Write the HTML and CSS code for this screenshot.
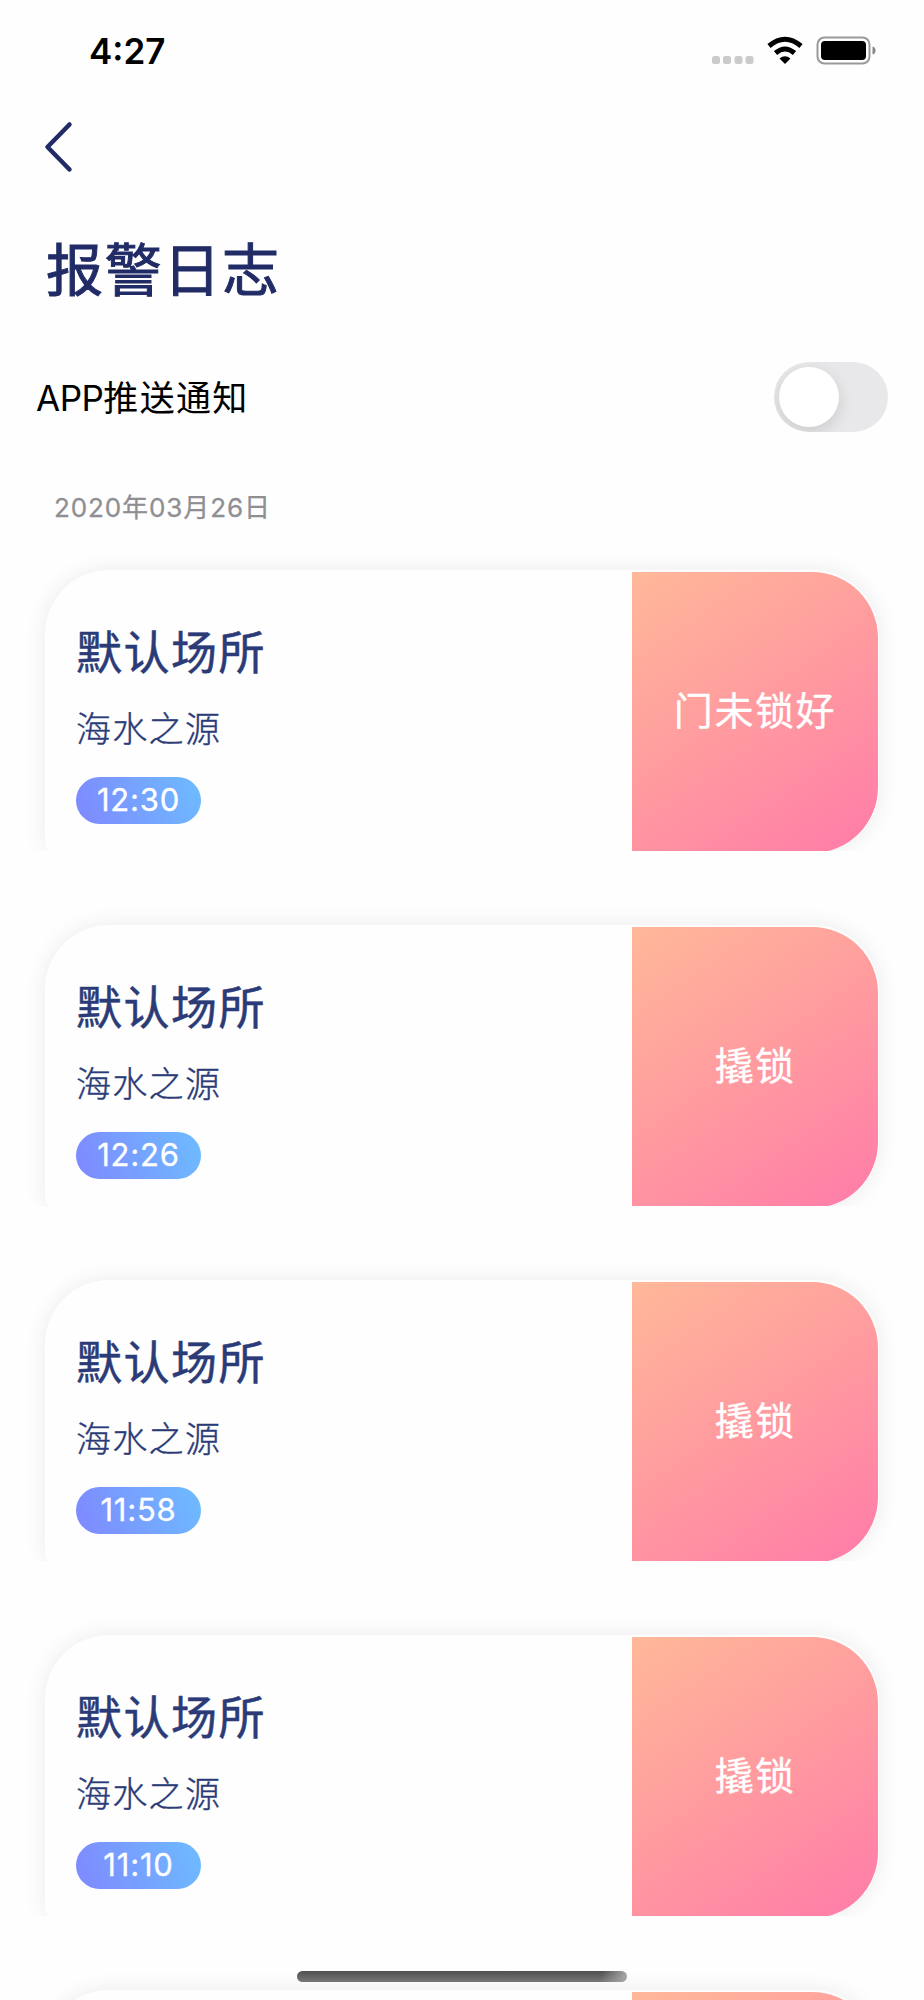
FILE: index.html
```
<!DOCTYPE html>
<html lang="zh-CN">
<head>
    <meta charset="UTF-8">
    <meta name="viewport" content="width=device-width, initial-scale=1.0">
    <title>报警日志</title>
    <link rel="stylesheet" href="styles.css">
</head>
<body>
    <div class="status-bar">
        <span class="time">4:27</span>
        <svg class="status-icons" width="168" height="30" viewBox="0 0 168 30">
            <g fill="#cbcbcb">
                <rect x="0" y="20" width="8" height="8" rx="2.5"/>
                <rect x="11" y="20" width="8" height="8" rx="2.5"/>
                <rect x="22.500" y="20" width="8" height="8" rx="2.5"/>
                <rect x="33.5" y="20" width="8" height="8" rx="2.5"/>
            </g>
            <g fill="none" stroke="#000" stroke-width="5">
                <path d="M57 10Q73 -3.500 89 10"/>
                <path d="M63.500 17Q73 9 82.500 17"/>
            </g>
            <path d="M67.500 22.500Q73 18 78.500 22.500L73 28Z"/>
            <rect x="105.500" y="1.500" width="52" height="26" rx="7" fill="none" stroke="#999" stroke-width="2"/>
            <rect x="109" y="5" width="45" height="19" rx="4"/>
            <path d="M160.500 10.500Q163.500 11 163.500 14.500T160.500 18.500Z" fill="#888"/>
        </svg>
    </div>

    <a class="back" href="#">
        <svg width="30" height="52" viewBox="0 0 30 52"><path d="M25.500 3.500L3.500 26L25.500 48.500" fill="none" stroke="#212c66" stroke-width="4.500" stroke-linecap="round" stroke-linejoin="round"/></svg>
    </a>

    <h1>报警日志</h1>

    <div class="push-row">
        <div class="push-label"><span class="en">APP</span>推送通知</div>
        <div class="switch"><div class="knob"></div></div>
    </div>

    <div class="date">2020年03月26日</div>

    <div class="list">
        <div class="item">
            <div class="card">
                <div class="info">
                    <div class="place">默认场所</div>
                    <div class="device">海水之源</div>
                    <div class="tag">12:30</div>
                </div>
                <div class="alarm">门未锁好</div>
            </div>
        </div>
        <div class="item">
            <div class="card">
                <div class="info">
                    <div class="place">默认场所</div>
                    <div class="device">海水之源</div>
                    <div class="tag">12:26</div>
                </div>
                <div class="alarm">撬锁</div>
            </div>
        </div>
        <div class="item">
            <div class="card">
                <div class="info">
                    <div class="place">默认场所</div>
                    <div class="device">海水之源</div>
                    <div class="tag">11:58</div>
                </div>
                <div class="alarm">撬锁</div>
            </div>
        </div>
        <div class="item">
            <div class="card">
                <div class="info">
                    <div class="place">默认场所</div>
                    <div class="device">海水之源</div>
                    <div class="tag">11:10</div>
                </div>
                <div class="alarm">撬锁</div>
            </div>
        </div>
        <div class="item last">
            <div class="card">
                <div class="info"></div>
                <div class="alarm"></div>
            </div>
        </div>
    </div>

    <div class="home-bar"></div>
</body>
</html>
```
FILE: styles.css
```
* {
    box-sizing: border-box;
}
body {
    margin: 0;
    position: relative;
    background: #fefefe;
    font-family: Inter, "Noto Sans CJK SC", sans-serif;
}
.status-bar {
    display: flex;
    justify-content: space-between;
    height: 122px;
    padding: 30px 44px 0 89px;
}
.time {
    font-size: 35px;
    font-weight: 600;
    line-height: 42px;
}
.status-icons {
    margin-top: 5.5px;
}
.back {
    display: block;
    height: 52px;
    margin: -1px 0 0 43.5px;
}
.back svg {
    display: block;
}
h1 {
    margin: 58px 0 0 46px;
    height: 80px;
    line-height: 80px;
    font-size: 57px;
    font-weight: 400;
    letter-spacing: 1.7px;
    color: #212c66;
    -webkit-text-stroke: 1px #212c66;
}
.push-row {
    display: flex;
    justify-content: space-between;
    align-items: center;
    margin-top: 51px;
    padding: 0 36px 0 36px;
    height: 70px;
}
.push-label {
    padding-bottom: 4px;
    font-size: 35px;
    letter-spacing: 1.3px;
}
.en {
    letter-spacing: -0.5px;
}
.switch {
    width: 114px;
    height: 70px;
    padding: 5px;
    border-radius: 35px;
    background: #e8e8ea;
    overflow: hidden;
}
.knob {
    width: 60px;
    height: 60px;
    border-radius: 50%;
    background: #fff;
    box-shadow: 0 5px 16px rgba(0, 0, 0, 0.13);
}
.date {
    margin: 56px 0 0 54px;
    height: 40px;
    line-height: 40px;
    font-size: 26px;
    letter-spacing: 0.9px;
    color: #8e8e93;
    -webkit-text-stroke: 0.3px #8e8e93;
}
.list {
    margin-top: 12px;
}
.item {
    height: 311px;
    margin-bottom: 44px;
    padding: 30px 45px 0;
    overflow: hidden;
}
/* cut off by the bottom of the screen */
.item.last {
    height: 40px;
    margin-bottom: 0;
}
.card {
    display: flex;
    height: 282.5px;
    padding: 1.5px 1px 0 0;
    background: #fefefe;
    border-radius: 64px 66px 66px 10px;
    box-shadow: 0 0 22px rgba(0, 0, 0, 0.08);
}
.info {
    flex: 1;
    padding: 47px 0 0 31px;
    color: #2a3b78;
}
.place {
    height: 66px;
    line-height: 66px;
    font-size: 46px;
    letter-spacing: 1.5px;
    -webkit-text-stroke: 0.5px #2a3b78;
}
.device {
    margin-top: 18px;
    height: 52px;
    line-height: 52px;
    font-size: 35px;
    font-weight: 300;
    letter-spacing: 1.3px;
    -webkit-text-stroke: 0.4px #2a3b78;
}
.tag {
    margin-top: 22px;
    width: 125px;
    height: 47px;
    line-height: 46px;
    border-radius: 24px;
    background: linear-gradient(70deg, #7f88ff, #6dbcff);
    color: #fff;
    font-size: 31px;
    letter-spacing: 0.8px;
    text-align: center;
    -webkit-text-stroke: 0.3px #fff;
}
.alarm {
    display: flex;
    align-items: center;
    justify-content: center;
    width: 246px;
    padding-bottom: 8px;
    border-radius: 0 66px 66px 0;
    background: linear-gradient(145deg, #ffb899, #ff9a9f 50%, #ff7ba9);
    color: #fff;
    font-size: 39px;
    letter-spacing: 1.6px;
    -webkit-text-stroke: 0.3px #fff;
}
.home-bar {
    position: absolute;
    left: 297px;
    top: 1971px;
    width: 330px;
    height: 11px;
    border-radius: 6px;
    background: linear-gradient(100deg, transparent 92%, #aaa), linear-gradient(#505050, #777);
}
```
